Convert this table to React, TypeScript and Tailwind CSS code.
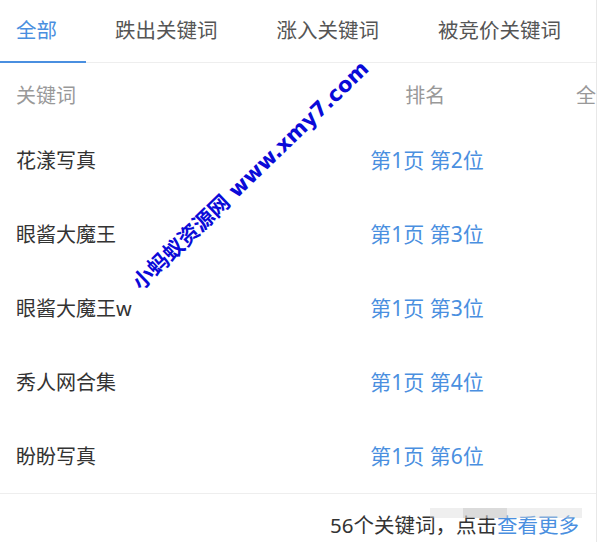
import React from "react";

const rows = [
  { k: "花漾写真", r: "第1页 第2位" },
  { k: "眼酱大魔王", r: "第1页 第3位" },
  { k: "眼酱大魔王w", r: "第1页 第3位" },
  { k: "秀人网合集", r: "第1页 第4位" },
  { k: "盼盼写真", r: "第1页 第6位" },
];

const tabs = ["全部", "跌出关键词", "涨入关键词", "被竞价关键词"];

export default function App() {
  return (
    <div
      className="relative w-[600px] h-[542px] bg-white overflow-hidden"
      style={{ fontFamily: '"Noto Sans", "Noto Sans CJK SC", sans-serif' }}
    >
      <div className="w-[597px] h-[542px] border-r border-[#e8e8e8] flex flex-col">
        {/* Tabs */}
        <div className="h-[63px] border-b border-[#eeeeee] flex items-stretch shrink-0">
          {tabs.map((t, i) => (
            <div
              key={t}
              className={
                i === 0
                  ? "w-[86px] pl-4 flex items-center text-[20.5px] text-[#4a8fe0] border-b-2 border-[#4a8fe0] -mb-px leading-none"
                  : "flex items-center text-[20.5px] text-[#555555] leading-none " +
                    (i === 1 ? "ml-[29px]" : "ml-[59px]")
              }
            >
              <span className="-mt-[1px]">{t}</span>
            </div>
          ))}
        </div>

        {/* Header */}
        <div className="h-[61px] flex items-center pt-[4px] text-[20px] text-[#999999] shrink-0">
          <div className="w-[355px] pl-4">关键词</div>
          <div className="w-[144px] text-center">排名</div>
          <div className="pl-[79px] whitespace-nowrap">全</div>
        </div>

        {/* Rows */}
        <div className="flex flex-col">
          {rows.map((row, i) => (
            <div key={i} className="h-[74px] flex items-center text-[20px]">
              <div className="w-[355px] pl-4 text-[#333333]">{row.k}</div>
              <div className="w-[144px] text-center text-[#4a8fe0] text-[21px]">{row.r}</div>
            </div>
          ))}
        </div>

        {/* Footer */}
        <div className="flex-1 border-t border-[#eeeeee] mt-[-1px] flex items-start justify-end pr-[17px] pt-[16px] text-[20.5px] text-[#333333]">
          <span>
            56个关键词，点击<span className="text-[#4a8fe0]">查看更多</span>
          </span>
        </div>
      </div>

      {/* blurred patch over footer */}
      <div className="absolute left-[430px] top-[508px] w-[152px] h-[10px] bg-[#d8d8d8]/40" />
      <div className="absolute left-[463px] top-[508px] w-[44px] h-[10px] bg-[#bdbdbd]/40" />

      {/* Watermark */}
      <div
        className="absolute left-[251px] top-[176px] -translate-x-1/2 -translate-y-1/2 -rotate-[44deg] whitespace-nowrap text-[21px] font-bold text-[#0a0ad8] leading-none"
        style={{ fontFamily: '"DejaVu Sans", "Noto Sans CJK SC", sans-serif' }}
      >
        小蚂蚁资源网 www.xmy7.com
      </div>
    </div>
  );
}
